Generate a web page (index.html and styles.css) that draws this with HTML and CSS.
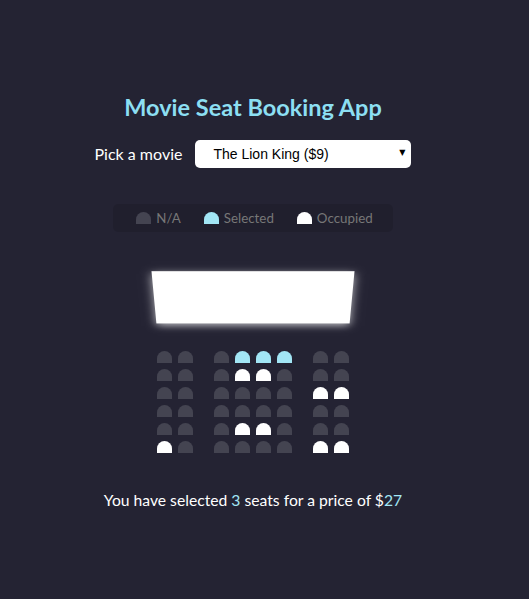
FILE: index.html
```html
<!DOCTYPE html>
<html lang="en">
<head>
<meta charset="UTF-8">
<title>Movie Seat Booking</title>
<link rel="stylesheet" href="styles.css">
</head>
<body>
<div class="page">
  <h1 class="title">Movie Seat Booking App</h1>
  <div class="movie-container">
    <label class="movie-label" for="movie">Pick a movie</label>
    <span class="select-wrap">
      <select id="movie" class="movie-select">
        <option value="9">The Lion King ($9)</option>
        <option value="10">Avengers: Endgame ($10)</option>
        <option value="12">Joker ($12)</option>
        <option value="8">Toy Story 4 ($8)</option>
      </select>
      <span class="select-arrow">▼</span>
    </span>
  </div>

  <ul class="showcase">
    <li class="legend-item"><span class="seat"></span><small class="legend-text">N/A</small></li>
    <li class="legend-item"><span class="seat selected"></span><small class="legend-text">Selected</small></li>
    <li class="legend-item"><span class="seat occupied"></span><small class="legend-text">Occupied</small></li>
  </ul>

  <div class="container">
    <div class="screen"></div>
    <div class="row"><span class="seat"></span><span class="seat gap-r"></span><span class="seat"></span><span class="seat selected"></span><span class="seat selected"></span><span class="seat selected"></span><span class="seat gap-l"></span><span class="seat"></span></div>
    <div class="row"><span class="seat"></span><span class="seat gap-r"></span><span class="seat"></span><span class="seat occupied"></span><span class="seat occupied"></span><span class="seat"></span><span class="seat gap-l"></span><span class="seat"></span></div>
    <div class="row"><span class="seat"></span><span class="seat gap-r"></span><span class="seat"></span><span class="seat"></span><span class="seat"></span><span class="seat"></span><span class="seat gap-l occupied"></span><span class="seat occupied"></span></div>
    <div class="row"><span class="seat"></span><span class="seat gap-r"></span><span class="seat"></span><span class="seat"></span><span class="seat"></span><span class="seat"></span><span class="seat gap-l"></span><span class="seat"></span></div>
    <div class="row"><span class="seat"></span><span class="seat gap-r"></span><span class="seat"></span><span class="seat occupied"></span><span class="seat occupied"></span><span class="seat"></span><span class="seat gap-l"></span><span class="seat"></span></div>
    <div class="row"><span class="seat occupied"></span><span class="seat gap-r"></span><span class="seat"></span><span class="seat"></span><span class="seat"></span><span class="seat"></span><span class="seat gap-l occupied"></span><span class="seat occupied"></span></div>
  </div>

  <p class="text">You have selected <span class="hl">3</span> seats for a price of $<span class="hl">27</span></p>
</div>
</body>
</html>
```

FILE: styles.css
```css
* { box-sizing: border-box; }

html, body {
  margin: 0;
  padding: 0;
  background-color: #242333;
}

body {
  color: #fff;
  font-family: Lato, "Open Sans", sans-serif;
  height: 599px;
  overflow: hidden;
}

.page {
  width: 506px;
  display: flex;
  flex-direction: column;
  align-items: center;
  padding-top: 91px;
}

.title {
  margin: 0;
  font-size: 23.5px;
  line-height: 32px;
  font-weight: 700;
  color: #8cdff2;
}

.movie-container {
  margin-top: 17px;
  display: flex;
  align-items: center;
  height: 28px;
}

.movie-label {
  font-size: 16px;
  line-height: 20px;
}

.select-wrap {
  position: relative;
  margin-left: 13px;
  display: inline-block;
}

.movie-select {
  display: block;
  width: 216px;
  height: 28px;
  background-color: #fff;
  border: 0;
  border-radius: 5px;
  font-family: "Liberation Sans", Arial, sans-serif;
  font-size: 14px;
  color: #000;
  padding: 4px 15px 5px 18px;
  -webkit-appearance: none;
  appearance: none;
}

.select-arrow {
  position: absolute;
  right: 6px;
  top: 8px;
  font-size: 8px;
  line-height: 10px;
  color: #000;
  pointer-events: none;
  font-family: "DejaVu Sans", sans-serif;
}

.showcase {
  margin: 36px 0 0 0;
  background: rgba(0, 0, 0, 0.1);
  padding: 0 10px;
  height: 28px;
  border-radius: 5px;
  color: #777;
  list-style-type: none;
  display: flex;
  align-items: center;
}

.legend-item {
  display: flex;
  align-items: center;
  margin: 0 10px;
}

.legend-text {
  margin-left: 2px;
  font-size: 13.33px;
  line-height: 16px;
}

.container {
  perspective: 1000px;
  margin-top: 16px;
  margin-bottom: 30px;
}

.row {
  display: flex;
}

.seat {
  display: block;
  background-color: #444451;
  height: 12px;
  width: 15px;
  margin: 3px;
  border-top-left-radius: 10px;
  border-top-right-radius: 10px;
}

.seat.selected { background-color: #a2e6f5; }
.seat.occupied { background-color: #fff; }
.seat.gap-r { margin-right: 18px; }
.seat.gap-l { margin-left: 18px; }

.screen {
  background-color: #fff;
  height: 70px;
  width: 100%;
  margin: 15px 0;
  transform: rotateX(-45deg);
  box-shadow: 0 3px 10px rgba(255, 255, 255, 0.7);
}

.text {
  margin: 5px 0;
  font-size: 15.7px;
  line-height: 19px;
}

.hl { color: #a2e6f5; }
```
